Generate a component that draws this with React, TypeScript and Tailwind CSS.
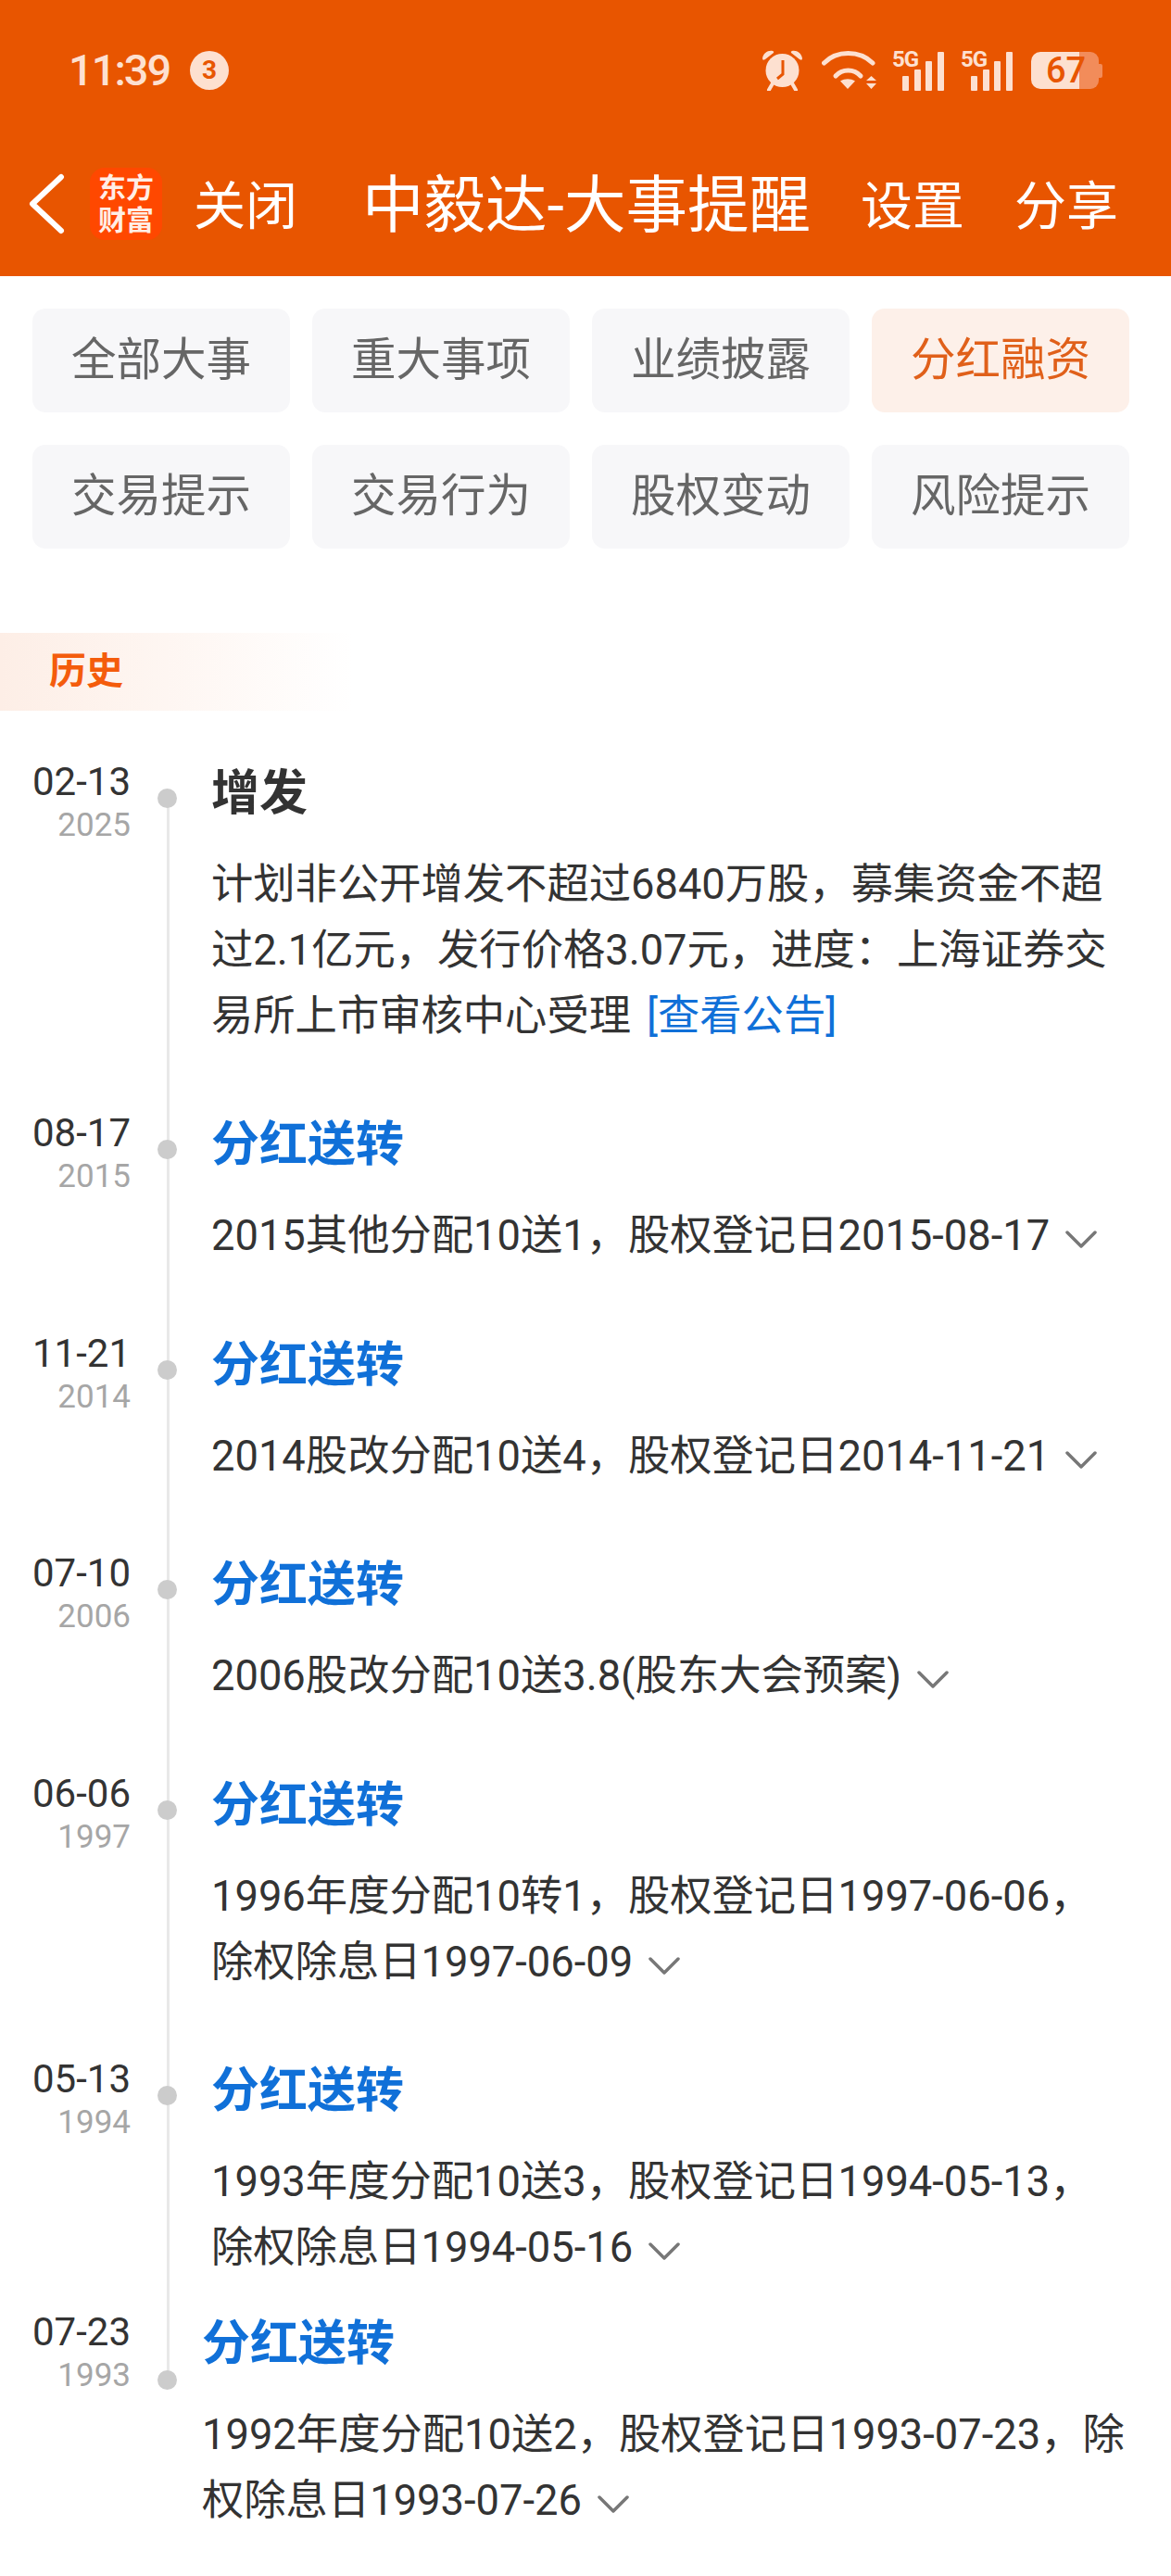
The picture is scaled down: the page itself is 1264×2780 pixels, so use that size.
const CJK = "font-['Roboto','Noto_Sans_CJK_SC',sans-serif]";

const TABS = ["全部大事", "重大事项", "业绩披露", "分红融资", "交易提示", "交易行为", "股权变动", "风险提示"];

function Chevron() {
  return (
    <svg width="34" height="19" viewBox="0 0 34 19" className="inline-block ml-[17px] align-[2px]" fill="none" stroke="#777" strokeWidth="3.5" strokeLinecap="round" strokeLinejoin="round">
      <path d="M2 2 L17 17 L32 2" />
    </svg>
  );
}

type Ev = { md: string; y: string; h: number; title: string; body: string; chev?: boolean; link?: boolean; dark?: boolean };

const EVENTS: Ev[] = [
  { md: "02-13", y: "2025", h: 379, title: "增发", dark: true, link: true, body: "计划非公开增发不超过6840万股，募集资金不超过2.1亿元，发行价格3.07元，进度：上海证券交易所上市审核中心受理" },
  { md: "08-17", y: "2015", h: 238, title: "分红送转", chev: true, body: "2015其他分配10送1，股权登记日2015-08-17" },
  { md: "11-21", y: "2014", h: 237, title: "分红送转", chev: true, body: "2014股改分配10送4，股权登记日2014-11-21" },
  { md: "07-10", y: "2006", h: 238, title: "分红送转", chev: true, body: "2006股改分配10送3.8(股东大会预案)" },
  { md: "06-06", y: "1997", h: 308, title: "分红送转", chev: true, body: "1996年度分配10转1，股权登记日1997-06-06，除权除息日1997-06-09" },
  { md: "05-13", y: "1994", h: 273, title: "分红送转", chev: true, body: "1993年度分配10送3，股权登记日1994-05-13，除权除息日1994-05-16" },
  { md: "07-23", y: "1993", h: 288, title: "分红送转", chev: true, body: "1992年度分配10送2，股权登记日1993-07-23，除权除息日1993-07-26" },
];

function Row({ e, first, last }: { e: Ev; first?: boolean; last?: boolean }) {
  return (
    <div className="flex" style={{ height: e.h }}>
      <div className="w-[141px] shrink-0 text-right">
        <div className="text-[42px] leading-[48px] text-[#333] mt-[1px]">{e.md}</div>
        <div className="text-[35px] leading-[44px] text-[#a6a6a6] mt-[1px]">{e.y}</div>
      </div>
      <div className={`${last ? "w-[77px]" : "w-[87px]"} shrink-0 relative`}>
        {first && <div className="absolute left-[39px] top-[40px] bottom-0 w-[3px] bg-[#e8e8e8]" />}
        {!first && !last && <div className="absolute left-[39px] top-0 bottom-0 w-[3px] bg-[#e8e8e8]" />}
        {last && <div className="absolute left-[39px] top-0 h-[70px] w-[3px] bg-[#e8e8e8]" />}
        <div className={`absolute left-[29px] ${last ? "top-[66px]" : "top-[32px]"} w-[21px] h-[21px] rounded-full bg-[#cccccc]`} />
      </div>
      <div className="flex-1 pr-[46px]">
        <div className={`text-[52px] leading-[60px] font-bold mt-[8px] ${e.dark ? "text-[#333]" : "text-[#1070d8]"}`}>{e.title}</div>
        <div className="mt-[32px] text-[45.3px] leading-[71px] text-[#333]">
          {e.body}
          {e.link && <span className="ml-[17px] text-[#1070d8]">[查看公告]</span>}
          {e.chev && <Chevron />}
        </div>
      </div>
    </div>
  );
}

export default function App() {
  return (
    <div className={`w-[1264px] h-[2780px] bg-white overflow-hidden ${CJK}`}>
      <header className="h-[298px] bg-[#e85500] flex flex-col">
        <div className="h-[150px] flex items-start justify-between pt-[50px] pl-[74px] pr-[74px] text-[#fde0d0]">
          <div className="flex items-center">
            <span className="w-[109px] text-[47px] leading-[52px] font-medium tracking-[-2px]">11:39</span>
            <span className="ml-[22px] w-[42px] h-[42px] rounded-full bg-[#fde0d0] text-[#e85500] text-[28px] font-bold flex items-center justify-center">3</span>
          </div>
          <div className="flex items-center h-[52px]">
            <svg width="43" height="44" viewBox="0 0 43 44" fill="#fde0d0">
              <path d="M0 9 C1 3 6 0 11 1 Q13 1.500 12 3 L3 10 Q0 12 0 9 Z M43 9 C42 3 37 0 32 1 Q30 1.500 31 3 L40 10 Q43 12 43 9 Z" />
              <circle cx="21.500" cy="22" r="18" />
              <path d="M11 36 L7 43 M32 36 L36 43" stroke="#fde0d0" strokeWidth="4" strokeLinecap="round" />
              <path d="M22 11 V26 L16 31" stroke="#e85500" strokeWidth="3" fill="none" />
            </svg>
            <svg className="ml-[21px]" width="59" height="42" viewBox="0 0 59 42" fill="none" stroke="#fde0d0" strokeWidth="5" strokeLinecap="round">
              <path d="M2.500 13 C16 -1 41 -1 55 13" />
              <path d="M15 27 C22 19 35 19 42 27" />
              <path d="M20 32.500 C25 29.500 31 29.500 36 32.500 L28 41 Z" fill="#fde0d0" stroke="none" />
              <path d="M48 32 L53.500 27 L59 32 Z M48 35 L53.500 41 L59 35 Z" fill="#fde0d0" stroke="none" />
            </svg>
            {[0, 1].map((i) => (
              <div key={i} className={`relative w-[56px] h-[44px] ${i === 0 ? "ml-[17px]" : "ml-[18px]"}`}>
                <span className="absolute left-0 top-[-2px] text-[24px] leading-[24px] font-bold tracking-[-1px]">5G</span>
                <div className="absolute left-[11px] right-0 bottom-0 flex items-end justify-between">
                  <span className="w-[7px] h-[16px] bg-[#fde0d0] rounded-[1px]" />
                  <span className="w-[7px] h-[23px] bg-[#fde0d0] rounded-[1px]" />
                  <span className="w-[7px] h-[32px] bg-[#fde0d0] rounded-[1px]" />
                  <span className="w-[7px] h-[42px] bg-[#fde0d0] rounded-[1px]" />
                </div>
              </div>
            ))}
            <div className="relative ml-[20px] w-[77px] h-[40px] flex">
              <div className="w-[52px] h-full bg-[#fde0d0] rounded-l-[10px]" />
              <div className="w-[21px] h-full bg-[#f28c5a] rounded-r-[9px]" />
              <div className="w-[4px] h-[15px] bg-[#f28c5a] self-center rounded-r-[2px]" />
              <span className="absolute left-[16px] top-0 text-[38px] leading-[40px] font-medium text-[#e85500]">67</span>
            </div>
          </div>
        </div>
        <div className="h-[148px] pb-[8px] flex items-center text-white">
          <svg className="ml-[30px] shrink-0" width="40" height="66" viewBox="0 0 40 66" fill="none" stroke="white" strokeWidth="6" strokeLinecap="round" strokeLinejoin="round">
            <path d="M36 4 L5 33 L36 62" />
          </svg>
          <div className="ml-[27px] shrink-0 w-[78px] h-[78px] rounded-[16px] bg-[#ff4800] flex flex-col items-center justify-center text-[30px] leading-[35px] font-bold text-[#ffeee6]">
            <span>东方</span>
            <span>财富</span>
          </div>
          <span className="ml-[34px] mt-[5px] text-[56px] leading-none">关闭</span>
          <span className="ml-[70px] mt-[5px] text-[66.5px] leading-none">中毅达-大事提醒</span>
          <span className="ml-[54px] mt-[5px] text-[56px] leading-none">设置</span>
          <span className="ml-[54px] mt-[5px] text-[56px] leading-none">分享</span>
        </div>
      </header>

      <div className="grid grid-cols-4 gap-x-[24px] gap-y-[35px] pl-[35px] pr-[45px] pt-[35px]">
        {TABS.map((t, i) => (
          <div key={t} className={`h-[112px] rounded-[14px] flex items-center justify-center text-[48.5px] ${i === 3 ? "bg-[#fdf0e9] text-[#e0601a]" : "bg-[#f7f7f9] text-[#666]"}`}>{t}</div>
        ))}
      </div>

      <div className="mt-[91px] h-[84px] w-[380px] bg-gradient-to-r from-[#fdeee6] to-white flex items-center pl-[53px] text-[40px] font-bold text-[#f45c0c]">历史</div>

      <div className="mt-[52px]">
        {EVENTS.map((e, i) => <Row key={e.md} e={e} first={i === 0} last={i === EVENTS.length - 1} />)}
      </div>
    </div>
  );
}
